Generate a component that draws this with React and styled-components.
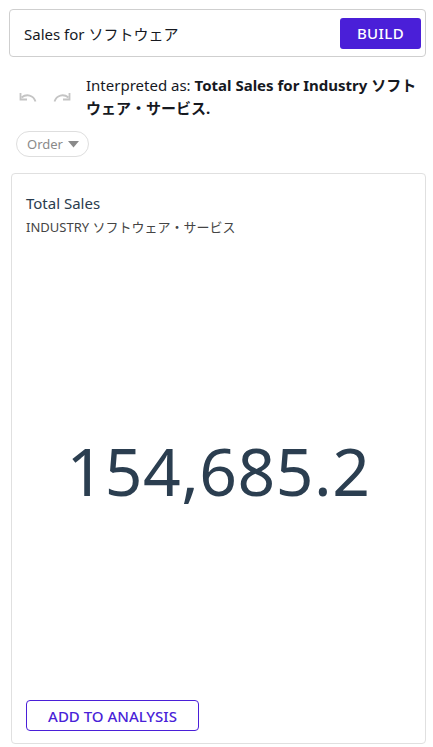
import styled, { createGlobalStyle } from 'styled-components';

const GlobalStyle = createGlobalStyle`
  html, body {
    margin: 0;
    padding: 0;
    background: #fff;
    font-family: "Noto Sans", "Noto Sans CJK JP", sans-serif;
  }
`

const Page = styled.div`
  box-sizing: border-box;
  width: 433px;
  height: 747px;
  padding: 9px 7px 3px 9px;
  display: flex;
  flex-direction: column;
`

const SearchBar = styled.div`
  box-sizing: border-box;
  height: 48px;
  border: 1px solid #cfcfcf;
  border-radius: 4px;
  display: flex;
  align-items: center;
  justify-content: space-between;
  padding: 0 4px 0 14px;
  font-size: 15px;
  color: #16191f;
`

const BuildButton = styled.button`
  width: 81px;
  height: 31px;
  border: none;
  border-radius: 3px;
  background: #4a1fd8;
  color: #fff;
  font-family: inherit;
  font-size: 15px;
  font-weight: 500;
  letter-spacing: 0.4px;
`

const Interpretation = styled.div`
  display: flex;
  align-items: center;
  margin-top: 17px;
  padding-left: 10px;
`

const History = styled.div`
  display: flex;
  gap: 16px;
  width: 67px;
  flex-shrink: 0;
  color: #c4c4c4;
`

const Sentence = styled.p`
  margin: 0;
  padding-right: 8px;
  font-size: 15px;
  line-height: 23px;
  color: #16191f;

  b {
    font-weight: 700;
  }
`

const Chip = styled.button`
  align-self: flex-start;
  margin: 11px 0 0 7px;
  height: 26px;
  padding: 0 9px 0 10px;
  border: 1px solid #dedede;
  border-radius: 13px;
  background: #fff;
  color: #8a8a8a;
  font-family: inherit;
  font-size: 13px;
  display: flex;
  align-items: center;
  gap: 5px;
`

const Card = styled.section`
  flex: 1;
  margin: 16px 0 0 2px;
  border: 1px solid #e0e0e0;
  border-radius: 4px;
  padding: 18px 14px 12px 14px;
  display: flex;
  flex-direction: column;
`

const Title = styled.h2`
  margin: 0;
  font-size: 15px;
  font-weight: 400;
  line-height: 22px;
  color: #2a3c4e;
`

const Subtitle = styled.div`
  margin-top: 3px;
  font-size: 13px;
  color: #444;
`

const Value = styled.div`
  flex: 1;
  display: flex;
  align-items: center;
  justify-content: center;
  padding-top: 4px;
  font-size: 66px;
  color: #2b3e50;
  letter-spacing: 0.5px;
`

const OutlineButton = styled.button`
  align-self: flex-start;
  width: 173px;
  height: 31px;
  border: 1px solid #4a1fd8;
  border-radius: 4px;
  background: #fff;
  color: #4a1fd8;
  font-family: inherit;
  font-size: 15px;
  font-weight: 500;
  padding: 0;
`

const Arrow = ({ flip }) => (
  <svg width="18" height="12" viewBox="0 0 18 12" style={flip ? { transform: 'scaleX(-1)' } : undefined}>
    <path d="M16.5 10.5 C14.5 4 7.5 2.5 2.5 6.5" fill="none" stroke="currentColor" strokeWidth="1.8" />
    <path d="M1.5 2 L1.5 8.5 L8 8.5" fill="none" stroke="currentColor" strokeWidth="1.8" />
  </svg>
)

const Caret = () => (
  <svg width="11" height="7" viewBox="0 0 11 7">
    <path d="M0 0 H11 L5.5 6.5 Z" fill="#8a8a8a" />
  </svg>
)

export default function App() {
  return (
    <>
      <GlobalStyle />
      <Page>
        <SearchBar>
          <span>Sales for ソフトウェア</span>
          <BuildButton>BUILD</BuildButton>
        </SearchBar>
        <Interpretation>
          <History>
            <Arrow />
            <Arrow flip />
          </History>
          <Sentence>
            Interpreted as: <b>Total Sales for Industry ソフトウェア・サービス.</b>
          </Sentence>
        </Interpretation>
        <Chip>
          Order <Caret />
        </Chip>
        <Card>
          <Title>Total Sales</Title>
          <Subtitle>INDUSTRY ソフトウェア・サービス</Subtitle>
          <Value>154,685.2</Value>
          <OutlineButton>ADD TO ANALYSIS</OutlineButton>
        </Card>
      </Page>
    </>
  );
}
